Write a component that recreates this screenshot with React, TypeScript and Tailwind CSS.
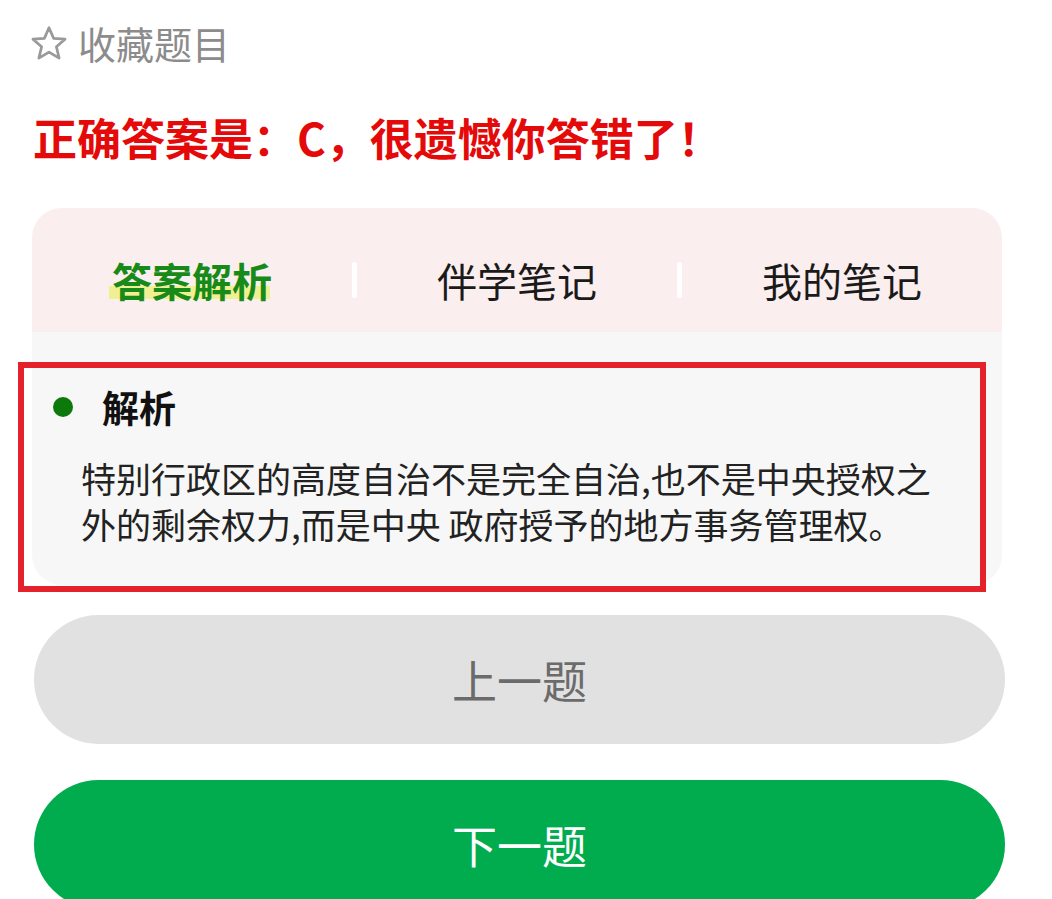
import React from "react";

const FONT = "font-['Noto_Sans_CJK_SC','Noto_Sans',sans-serif]";

const StarOutline = () => (
  <svg width="38" height="36" viewBox="0 0 36 34" fill="none">
    <polygon
      points="18,2.5 22.4,12.6 33.2,13.4 25,20.6 27.6,31.3 18,25.6 8.4,31.3 11,20.6 2.8,13.4 13.6,12.6"
      stroke="#9a9a9a"
      strokeWidth="2.6"
      strokeLinejoin="round"
    />
  </svg>
);

const tabs = ["答案解析", "伴学笔记", "我的笔记"];

export default function App() {
  return (
    <div className={`relative h-[899px] w-[1052px] overflow-hidden bg-white ${FONT}`}>
      {/* favourite row */}
      <div className="flex h-[86px] items-center gap-[10px] pl-[30px]">
        <StarOutline />
        <span className="text-[38px] leading-none text-[#8c8c8c]">收藏题目</span>
      </div>

      {/* result line */}
      <div className="mt-[21px] pl-[33px] text-[44px] font-bold leading-[60px] text-[#e50a0a]">
        正确答案是：C，很遗憾你答错了！
      </div>

      {/* analysis card */}
      <div className="mx-[32px] mt-[41px] w-[970px] overflow-hidden rounded-[30px]">
        <div className="flex h-[124px] items-center bg-[#fbeeee] pt-[20px]">
          {tabs.map((t, i) => (
            <React.Fragment key={t}>
              {i > 0 && <div className="h-[36px] w-[5px] rounded-full bg-white" />}
              <div className="flex flex-1 justify-center">
                {i === 0 ? (
                  <span className="relative text-[40px] font-bold leading-[60px] text-[#178a17]">
                    <span className="absolute left-[-3px] right-[2px] top-[36px] h-[13px] bg-[#eef07a]/80" />
                    <span className="relative">{t}</span>
                  </span>
                ) : (
                  <span className="text-[40px] leading-[60px] text-[#1a1a1a]">{t}</span>
                )}
              </div>
            </React.Fragment>
          ))}
        </div>
        <div className="h-[253px] bg-[#f7f7f7] pl-[21px] pt-[50px]">
          <div className="flex h-[50px] items-center">
            <span className="h-[20px] w-[20px] rounded-full bg-[#0b7a0b]" />
            <span className="ml-[29px] text-[37px] font-bold leading-none text-[#111]">解析</span>
          </div>
          <p className="mt-[23px] pl-[28px] text-[35px] leading-[46px] text-[#222]">
            <span className="block">特别行政区的高度自治不是完全自治,也不是中央授权之</span>
            <span className="block">外的剩余权力,而是中央 政府授予的地方事务管理权。</span>
          </p>
        </div>
      </div>

      {/* annotation box */}
      <div className="absolute left-[18px] top-[362px] h-[230px] w-[968px] border-[6px] border-[#e3222b]" />

      {/* navigation */}
      <button className="mx-[34px] mt-[30px] flex h-[129px] w-[971px] items-center justify-center rounded-full bg-[#e1e1e1] text-[45px] text-[#6b6b6b]">
        上一题
      </button>
      <button className="mx-[34px] mt-[36px] flex h-[129px] w-[971px] items-center justify-center rounded-full bg-[#00ac4e] text-[45px] text-white">
        下一题
      </button>
    </div>
  );
}
